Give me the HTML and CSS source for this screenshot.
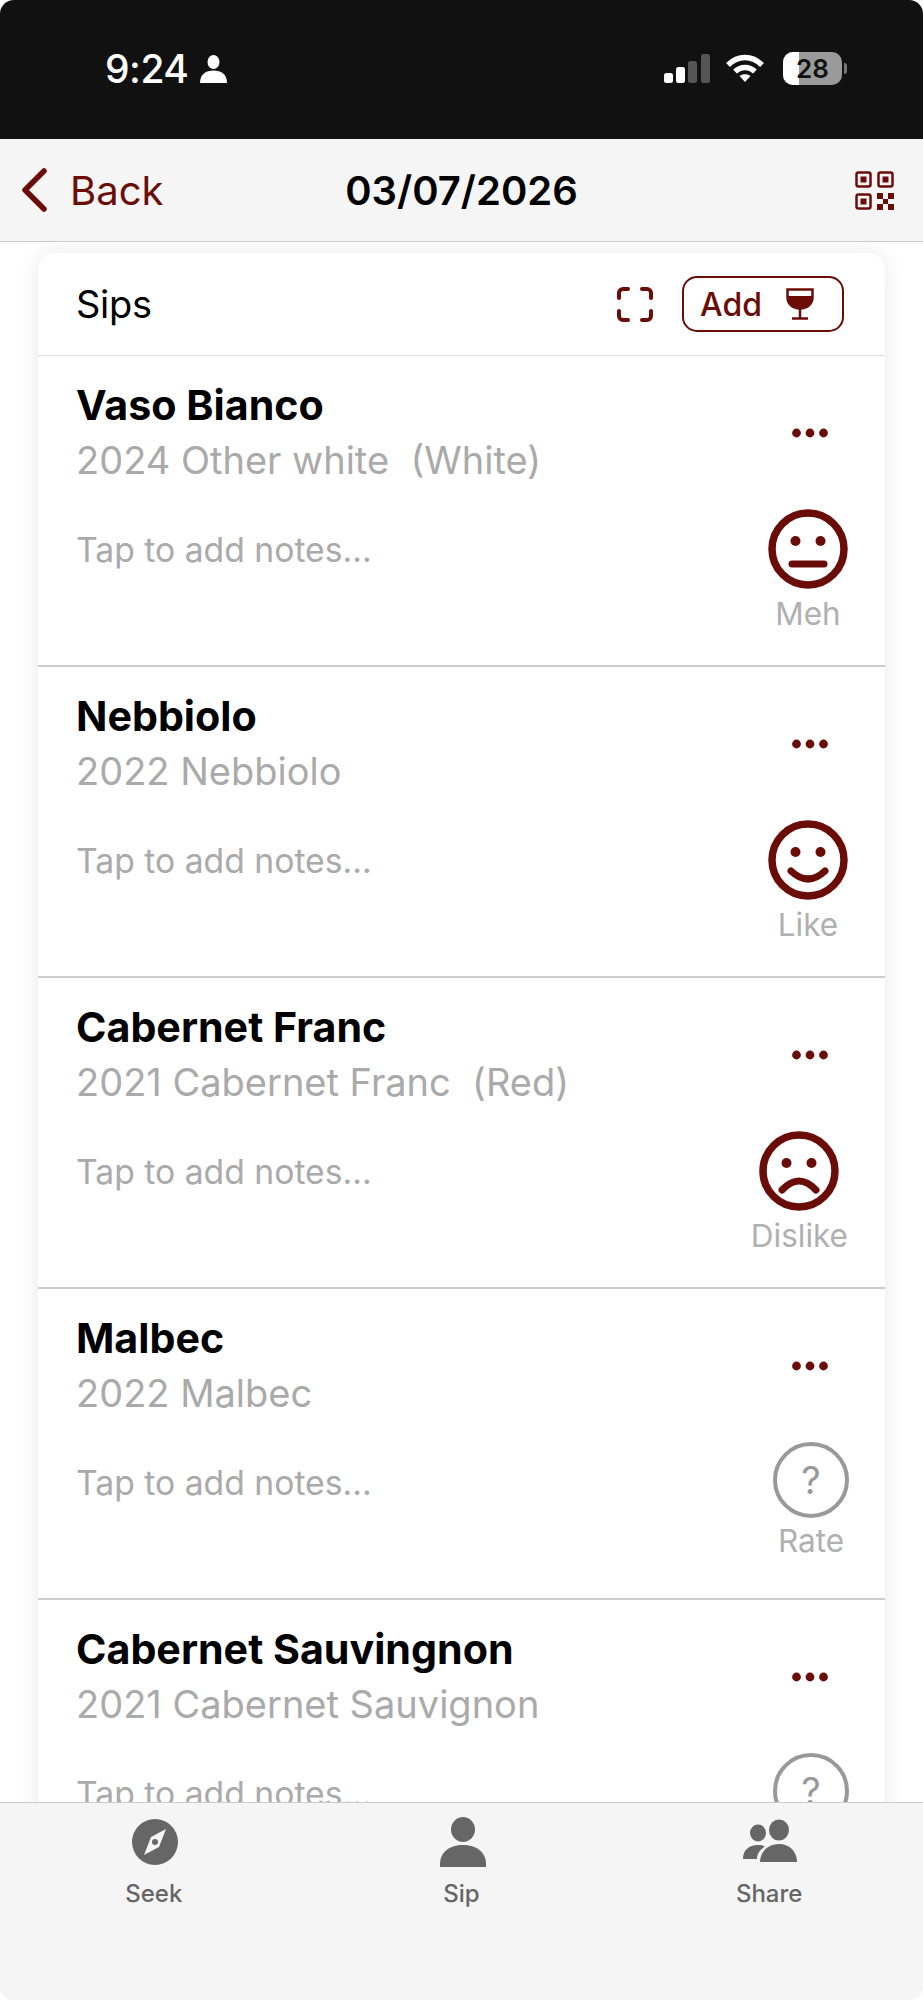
FILE: index.html
```html
<!DOCTYPE html>
<html lang="en">
<head>
<meta charset="utf-8">
<title>Sips</title>
<link rel="stylesheet" href="styles.css">
</head>
<body>
<svg class="defs" width="0" height="0" aria-hidden="true">
  <symbol id="dots" viewBox="0 0 36 10"><circle cx="4.5" cy="5" r="4.4"/><circle cx="18" cy="5" r="4.4"/><circle cx="31.5" cy="5" r="4.4"/></symbol>
  <symbol id="face-base" viewBox="0 0 80 80"><circle cx="40" cy="40" r="36" fill="none" stroke="#6a0d08" stroke-width="7.5"/><circle cx="27.5" cy="32" r="5"/><circle cx="52.5" cy="32" r="5"/></symbol>
</svg>
<div class="phone">
  <div class="status">
    <div class="status-left">
      <span class="time">9:24</span>
      <svg class="status-person" viewBox="0 0 27 28"><ellipse cx="13.5" cy="7" rx="6" ry="7"/><path d="M0 28c0-9 6-12.500 13.500-12.500S27 19 27 28z"/></svg>
    </div>
    <div class="status-right">
      <svg class="signal" viewBox="0 0 46 29"><rect x="0" y="19" width="9" height="10" rx="2.500" fill="#fff"/><rect x="12" y="13" width="9" height="16" rx="2.500" fill="#fff"/><rect x="24" y="7" width="9" height="22" rx="2.500" fill="#555"/><rect x="37" y="0" width="9" height="29" rx="2.500" fill="#555"/></svg>
      <svg class="wifi" viewBox="0 0 40 29"><path d="M3 11C13 1 27 1 37 11" /><path d="M10 17.500c6-5.500 14-5.500 20 0"/><path d="M20 28l-5.500-6c3-2.500 8-2.500 11 0z" class="wifi-dot"/></svg>
      <div class="battery"><div class="battery-fill"></div><span class="battery-num">28</span><span class="battery-tip"></span></div>
    </div>
  </div>
  <header class="nav">
    <div class="back">
      <svg class="chevron" viewBox="0 0 26 44"><path d="M23 3L4 22l19 19"/></svg>
      <span>Back</span>
    </div>
    <h1 class="date">03/07/2026</h1>
    <svg class="qr" viewBox="0 0 39 39">
      <g fill="none" stroke="#6a0d08" stroke-width="2.500"><rect x="1.500" y="1.500" width="14" height="14" rx="2"/><rect x="23.500" y="1.500" width="14" height="14" rx="2"/><rect x="1.500" y="23.500" width="14" height="14" rx="2"/></g>
      <rect x="5.500" y="5.500" width="6" height="6"/><rect x="27.500" y="5.500" width="6" height="6"/><rect x="5.500" y="27.500" width="6" height="6"/>
      <rect x="22" y="22" width="6" height="6"/><rect x="33" y="22" width="6" height="6"/><rect x="28" y="28" width="5" height="5"/><rect x="22" y="33" width="6" height="6"/><rect x="33" y="33" width="6" height="6"/>
    </svg>
  </header>
  <main class="content">
    <section class="card">
      <div class="card-head">
        <span class="card-title">Sips</span>
        <svg class="scan" viewBox="0 0 36 35"><path d="M2 11V6a4 4 0 0 1 4-4h5M25 2h5a4 4 0 0 1 4 4v5M34 24v5a4 4 0 0 1-4 4h-5M11 33H6a4 4 0 0 1-4-4v-5"/></svg>
        <div class="add">
          <span>Add</span>
          <svg class="glass" viewBox="0 0 28 32"><path d="M1.500 1.500h25V9c0 7-5 11.500-12.500 11.500S1.500 16 1.500 9z" fill="none" stroke="#6a0d08" stroke-width="2.500"/><path d="M2 8h24v2c0 6-5 10-12 10S2 16 2 10z"/><path d="M14 20v10M6 30.500h16" fill="none" stroke="#6a0d08" stroke-width="2.500"/></svg>
        </div>
      </div>

      <article class="sip">
        <div class="sip-text">
          <div class="sip-name">Vaso Bianco</div>
          <div class="sip-meta">2024 Other white&nbsp; (White)</div>
          <div class="sip-notes">Tap to add notes...</div>
        </div>
        <div class="sip-side">
          <svg class="more"><use href="#dots"/></svg>
          <div class="rating">
            <svg class="face" viewBox="0 0 80 80"><use href="#face-base"/><path class="mouth" d="M24 55h32"/></svg>
            <span class="rating-label">Meh</span>
          </div>
        </div>
      </article>

      <article class="sip">
        <div class="sip-text">
          <div class="sip-name">Nebbiolo</div>
          <div class="sip-meta">2022 Nebbiolo</div>
          <div class="sip-notes">Tap to add notes...</div>
        </div>
        <div class="sip-side">
          <svg class="more"><use href="#dots"/></svg>
          <div class="rating">
            <svg class="face" viewBox="0 0 80 80"><use href="#face-base"/><path class="mouth" d="M23 51Q40 67 57 51"/></svg>
            <span class="rating-label">Like</span>
          </div>
        </div>
      </article>

      <article class="sip">
        <div class="sip-text">
          <div class="sip-name">Cabernet Franc</div>
          <div class="sip-meta">2021 Cabernet Franc&nbsp; (Red)</div>
          <div class="sip-notes">Tap to add notes...</div>
        </div>
        <div class="sip-side">
          <svg class="more"><use href="#dots"/></svg>
          <div class="rating">
            <svg class="face" viewBox="0 0 80 80"><use href="#face-base"/><path class="mouth" d="M23 59Q40 41 57 59"/></svg>
            <span class="rating-label">Dislike</span>
          </div>
        </div>
      </article>

      <article class="sip">
        <div class="sip-text">
          <div class="sip-name">Malbec</div>
          <div class="sip-meta">2022 Malbec</div>
          <div class="sip-notes">Tap to add notes...</div>
        </div>
        <div class="sip-side">
          <svg class="more"><use href="#dots"/></svg>
          <div class="rating rating-empty">
            <div class="unrated">?</div>
            <span class="rating-label">Rate</span>
          </div>
        </div>
      </article>

      <article class="sip">
        <div class="sip-text">
          <div class="sip-name">Cabernet Sauvingnon</div>
          <div class="sip-meta">2021 Cabernet Sauvignon</div>
          <div class="sip-notes">Tap to add notes...</div>
        </div>
        <div class="sip-side">
          <svg class="more"><use href="#dots"/></svg>
          <div class="rating rating-empty">
            <div class="unrated">?</div>
            <span class="rating-label">Rate</span>
          </div>
        </div>
      </article>
    </section>
  </main>
  <nav class="tabs">
    <div class="tab">
      <svg class="tab-icon" viewBox="0 0 54 50"><circle cx="27" cy="25" r="23"/><path d="M38 12L31 30 16 38 23 20z" fill="#f5f5f5"/><circle cx="27" cy="25" r="3" fill="#666"/></svg>
      <span>Seek</span>
    </div>
    <div class="tab">
      <svg class="tab-icon" viewBox="0 0 54 50"><ellipse cx="27" cy="12.500" rx="12" ry="12.500"/><path d="M4 50V47C4 35 14 28 27 28S50 35 50 47V50z"/></svg>
      <span>Sip</span>
    </div>
    <div class="tab">
      <svg class="tab-icon" viewBox="0 0 54 50"><ellipse cx="15" cy="16" rx="8" ry="8.500"/><path d="M0 42c0-9 6-14 15-14 3 0 5 .5 7 1.500-5 3-8 7-8 12.500z"/><ellipse cx="36" cy="13" rx="10" ry="10.500"/><path d="M17 45c0-10 8-18 19-18s18 8 18 18z"/></svg>
      <span>Share</span>
    </div>
  </nav>
</div>
</body>
</html>
```
FILE: styles.css
```css
* { box-sizing: border-box; }
html, body { margin: 0; padding: 0; background: #fff; }
body { font-family: Inter, "Noto Sans", "Liberation Sans", sans-serif; }
.defs { position: absolute; }

.phone { width: 923px; height: 2000px; display: flex; flex-direction: column; overflow: hidden; background: #fff; }

.status { flex: 0 0 139px; background: #111; border-radius: 14px 14px 0 0; display: flex; justify-content: space-between; padding: 50px 81px 0 105px; color: #fff; }
.status-left { display: flex; align-items: flex-start; gap: 12px; height: 38px; }
.time { font-size: 39px; font-weight: 500; line-height: 38px; letter-spacing: -0.5px; }
.status-person { width: 27px; height: 28px; fill: #fff; margin-top: 5px; }
.status-right { display: flex; align-items: flex-start; padding-top: 2px; }
.signal { width: 46px; height: 29px; margin-top: 2px; }
.wifi { width: 40px; height: 29px; margin: 2px 0 0 15px; fill: none; stroke: #fff; stroke-width: 5.500px; }
.wifi-dot { fill: #fff; stroke: none; }
.battery { position: relative; width: 59px; height: 33px; margin-left: 18px; background: #9a9a9a; border-radius: 10px; display: flex; align-items: center; justify-content: center; }
.battery-fill { position: absolute; left: 0; top: 0; bottom: 0; width: 16px; background: #fff; border-radius: 10px 0 0 10px; }
.battery-num { position: relative; font-size: 26px; font-weight: 600; color: #111; }
.battery-tip { position: absolute; right: -5px; top: 11px; width: 3px; height: 11px; background: #777; border-radius: 0 3px 3px 0; }

.nav { flex: 0 0 103px; background: #f5f5f5; border-bottom: 1.500px solid #ccc; display: grid; grid-template-columns: 1fr auto 1fr; align-items: center; padding: 0 29px 0 21px; color: #000; }
.back { display: flex; align-items: center; gap: 23px; font-size: 40px; color: #6a0d08; }
.chevron { width: 26px; height: 44px; fill: none; stroke: #6a0d08; stroke-width: 5.500px; stroke-linecap: round; stroke-linejoin: round; }
.date { margin: 0 0 0 8px; text-align: center; font-size: 40px; font-weight: 600; }
.qr { width: 39px; height: 39px; fill: #6a0d08; justify-self: end; }

.content { flex: 1; min-height: 0; overflow: hidden; padding: 11px 38px 0; }
.card { background: #fff; border-radius: 16px 16px 0 0; box-shadow: 0 0 22px rgba(0, 0, 0, .09); }
.card-head { height: 103px; display: flex; align-items: center; padding: 0 41px 0 38px; border-bottom: 1.500px solid #ddd; }
.card-title { flex: 1; font-size: 38px; color: #000; letter-spacing: -0.3px; }
.scan { width: 36px; height: 35px; fill: none; stroke: #6a0d08; stroke-width: 4px; stroke-linecap: round; }
.add { width: 162px; height: 56px; margin-left: 29px; border: 2.500px solid #6a0d08; border-radius: 15px; display: flex; align-items: center; justify-content: space-between; padding: 0 28px 0 16px; font-size: 32px; font-weight: 500; color: #6a0d08; }
.glass { width: 28px; height: 32px; fill: #6a0d08; }

.sip { height: 311px; display: flex; justify-content: space-between; padding: 0 37px 0 38px; border-bottom: 2px solid #ccc; }
.sip-text { padding-top: 25px; }
.sip-name { font-size: 41.2px; line-height: 48px; font-weight: 650; color: #000; }
.sip-meta { margin-top: 7px; font-size: 38px; line-height: 48px; color: #aaa; }
.sip-notes { margin-top: 42px; font-size: 33.7px; line-height: 48px; color: #aaa; }
.sip-side { display: flex; flex-direction: column; align-items: flex-end; padding-top: 72px; }
.more { width: 36px; height: 10px; margin-right: 20px; fill: #6a0d08; }
.rating { display: flex; flex-direction: column; align-items: center; margin-top: 71px; }
.rating-empty { margin-right: -1px; }
.face { width: 80px; height: 80px; fill: #6a0d08; }
.mouth { fill: none; stroke: #6a0d08; stroke-width: 7px; stroke-linecap: round; }
.unrated { width: 76px; height: 76px; border: 4px solid #999; border-radius: 50%; display: flex; align-items: center; justify-content: center; font-size: 38px; color: #999; }
.rating-label { margin-top: 5px; font-size: 31.5px; line-height: 40px; color: #b0b0b0; }
.rating-empty .rating-label { margin-top: 3px; }

.tabs { flex: 0 0 198px; background: #f5f5f5; border-top: 1.500px solid #ccc; display: flex; padding-top: 14px; border-radius: 0 0 14px 14px; }
.tab { flex: 1; display: flex; flex-direction: column; align-items: center; font-size: 24px; color: #666; font-weight: 500; }
.tab-icon { width: 54px; height: 50px; margin-left: 2px; fill: #666; }
.tab span { margin-top: 11px; line-height: 32px; }
```
